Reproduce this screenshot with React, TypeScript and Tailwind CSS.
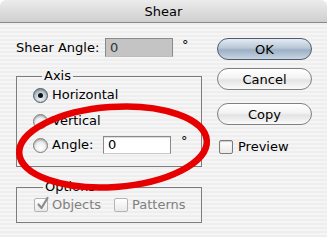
import React from "react";

function Radio({ checked }: { checked?: boolean }) {
  return (
    <span
      className={
        "flex h-[15px] w-[15px] shrink-0 items-center justify-center rounded-full border shadow-[inset_0_1px_2px_rgba(0,0,0,0.25)] " +
        (checked
          ? "border-[#4e5a68] bg-[radial-gradient(circle_at_50%_70%,#f2f6fa_0%,#b7c3cf_60%,#8c9aa9_100%)]"
          : "border-[#7b7b7b] bg-[radial-gradient(circle_at_50%_70%,#ffffff_0%,#ececec_55%,#bdbdbd_100%)]")
      }
    >
      {checked && <span className="h-[5px] w-[5px] rounded-full bg-[#111]" />}
    </span>
  );
}

function Check({ checked, disabled }: { checked?: boolean; disabled?: boolean }) {
  return (
    <span
      className={
        "relative flex h-[14px] w-[14px] shrink-0 items-center justify-center rounded-[2px] border bg-[linear-gradient(to_bottom,#ffffff,#e9e9e9)] " +
        (disabled ? "border-[#b4b4b4]" : "border-[#7b7b7b] shadow-[inset_0_1px_1px_rgba(0,0,0,0.2)]")
      }
    >
      {checked && (
        <svg viewBox="0 0 14 14" className="absolute -top-[3px] left-[1px] h-[15px] w-[14px]">
          <path d="M2.5 8 L5.5 11.5 L11.5 1.5" fill="none" stroke="#8c8c8c" strokeWidth="2.2" strokeLinecap="round" strokeLinejoin="round" />
        </svg>
      )}
    </span>
  );
}

function Button({ label, primary }: { label: string; primary?: boolean }) {
  return (
    <div
      className={
        "flex h-[22px] w-[95px] items-center justify-center rounded-full border leading-none " +
        (primary
          ? "border-[#4d5c70] bg-[linear-gradient(to_bottom,#e4ebf2_0%,#b9c7d6_45%,#9cafc4_55%,#c9d6e3_100%)]"
          : "border-[#808080] bg-[linear-gradient(to_bottom,#ffffff_0%,#f3f3f3_45%,#e3e3e3_55%,#fafafa_100%)]")
      }
    >
      {label}
    </div>
  );
}

export default function App() {
  return (
    <div className="relative h-[237px] w-[328px] overflow-hidden bg-white font-['DejaVu_Sans',sans-serif] text-[13px] text-black">
      <div className="flex h-full w-[327px] flex-col overflow-hidden rounded-t-[6px]">
        <div className="flex h-[23px] shrink-0 items-center justify-center border-b border-[#8a8a8a] bg-[linear-gradient(to_bottom,#ececec,#cfcfcf)] pt-[1px]">
          Shear
        </div>
        <div className="flex flex-1 bg-[repeating-linear-gradient(to_bottom,#eeeeee_0px,#eeeeee_2px,#f5f5f5_2px,#f5f5f5_4px)]">
          {/* left column */}
          <div className="ml-[16px] flex w-[186px] flex-col">
            <div className="mt-[15px] flex h-[19px] items-center">
              <span className="w-[89px]">Shear Angle:</span>
              <div className="flex h-[19px] w-[68px] items-center border border-[#8a8a8a] border-b-[#bdbdbd] bg-[#c4c4c4] pl-[4px] text-[#333]">
                0
              </div>
              <span className="ml-[9px] self-start leading-[14px]">°</span>
            </div>

            <fieldset className="mt-[11px] border border-[#7d7d7d] pb-[11px] pl-[16px]">
              <legend className="ml-[9px] px-[2px] leading-[16px]">Axis</legend>
              <div className="mt-[1px] flex h-[20px] items-center gap-[4px]">
                <Radio checked />
                <span>Horizontal</span>
              </div>
              <div className="mt-[6px] flex h-[20px] items-center gap-[4px]">
                <Radio />
                <span>Vertical</span>
              </div>
              <div className="mt-[4px] flex h-[20px] items-center">
                <Radio />
                <span className="ml-[4px] w-[51px]">Angle:</span>
                <div className="flex h-[18px] w-[68px] items-center border border-[#8a8a8a] border-b-[#c8c8c8] bg-white pl-[4px] shadow-[inset_0_1px_1px_rgba(0,0,0,0.15)]">
                  0
                </div>
                <span className="ml-[10px] self-start leading-[12px]">°</span>
              </div>
            </fieldset>

            <fieldset className="mt-[12px] border border-[#7d7d7d] pb-[7px] pl-[17px]">
              <legend className="ml-[9px] px-[2px] leading-[16px]">Options</legend>
              <div className="flex h-[20px] items-center text-[#808080]">
                <Check checked disabled />
                <span className="ml-[4px] w-[62px]">Objects</span>
                <Check disabled />
                <span className="ml-[4px]">Patterns</span>
              </div>
            </fieldset>
          </div>

          {/* right column */}
          <div className="ml-[15px] flex w-[95px] flex-col">
            <div className="mt-[15px]">
              <Button label="OK" primary />
            </div>
            <div className="mt-[8px]">
              <Button label="Cancel" />
            </div>
            <div className="mt-[13px]">
              <Button label="Copy" />
            </div>
            <div className="ml-[2px] mt-[15px] flex h-[14px] items-center gap-[5px]">
              <Check />
              <span>Preview</span>
            </div>
          </div>
        </div>
      </div>

      <svg className="pointer-events-none absolute inset-0" width="328" height="237" viewBox="0 0 328 237">
        <ellipse cx="113" cy="147" rx="94" ry="40" fill="none" stroke="#e60000" strokeWidth="6.5" transform="rotate(-4 113 147)" />
      </svg>
    </div>
  );
}
